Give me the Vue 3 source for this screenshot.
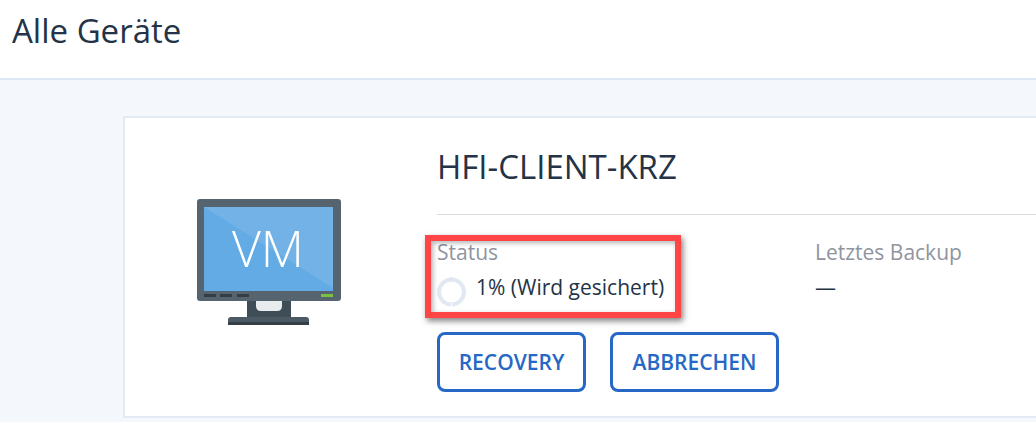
<script setup>
const ledBars = [8, 24, 41]
</script>

<template>
  <div class="page">
    <header class="top">
      <h1>Alle Geräte</h1>
    </header>
    <main class="content">
      <section class="card">
        <div class="device-icon">
          <svg width="146" height="127" viewBox="0 0 146 127">
            <rect x="51" y="100" width="44" height="19" fill="#3f4d57" />
            <path d="M60 101h26v6q0 5-5 5H65q-5 0-5-5z" fill="#e9ecee" />
            <path d="M32 121q0-3 3-3h75q3 0 3 3v5H32z" fill="#4b5a64" />
            <rect x="32" y="123" width="81" height="3" fill="#353f47" />
            <rect x="1" y="0" width="144" height="102" rx="3" fill="#55646e" />
            <rect x="8" y="8" width="129" height="84" fill="#62abe4" />
            <path d="M8 8h129v81z" fill="#73b2e6" />
            <rect v-for="x in ledBars" :key="x" :x="x" y="95" width="12" height="3" fill="#343d44" />
            <rect x="125" y="95" width="12" height="3" fill="#7cc242" />
            <text x="72" y="68" text-anchor="middle" class="vm-label">VM</text>
          </svg>
        </div>
        <div class="details">
          <h2>HFI-CLIENT-KRZ</h2>
          <div class="meta">
            <div class="status">
              <div class="label">Status</div>
              <div class="value status-value">
                <svg class="spinner" width="29" height="30" viewBox="0 0 29 30">
                  <circle cx="14.5" cy="15" r="12.5" fill="none" stroke="#e1e8f2" stroke-width="4" />
                  <rect x="14" y="0" width="1" height="4" fill="#d9e4b8" />
                  <rect x="14" y="26" width="1" height="4" fill="#fff" />
                </svg>
                <span>1% (Wird gesichert)</span>
              </div>
            </div>
            <div class="backup">
              <div class="label">Letztes Backup</div>
              <div class="value">—</div>
            </div>
            <div class="highlight"></div>
          </div>
          <div class="actions">
            <button class="recovery">RECOVERY</button>
            <button class="abort">ABBRECHEN</button>
          </div>
        </div>
      </section>
    </main>
  </div>
</template>

<style>
html, body {
  margin: 0;
  background: #f4f7fc;
  overflow: hidden;
}
</style>

<style scoped>
.page {
  width: 1036px;
  height: 422px;
  overflow: hidden;
  font-family: "Open Sans", "Noto Sans", sans-serif;
  color: #243347;
}

.top {
  height: 78px;
  background: #fff;
  border-bottom: 2px solid #dce6f5;
}

h1 {
  margin: 0;
  padding: 9px 0 0 12px;
  font-size: 33px;
  line-height: 44px;
  font-weight: 400;
}

.content {
  padding: 36px 0 0 123px;
}

.card {
  width: 1000px;
  height: 302px;
  box-sizing: border-box;
  background: #fff;
  border: 2px solid #e2eaf6;
  display: flex;
}

.device-icon {
  width: 312px;
  padding: 81px 0 0 71px;
  box-sizing: border-box;
  flex: none;
}

.device-icon svg {
  display: block;
}

.vm-label {
  font-family: "Open Sans", sans-serif;
  font-size: 50px;
  font-weight: 300;
  fill: #fff;
}

.details {
  flex: 1;
  padding-top: 27px;
}

h2 {
  margin: 0;
  height: 69px;
  border-bottom: 1px solid #d9dde2;
  font-size: 33px;
  line-height: 44px;
  font-weight: 400;
}

.meta {
  position: relative;
  display: flex;
  padding-top: 23px;
  height: 96px;
  box-sizing: border-box;
  font-size: 21px;
}

.status {
  width: 378px;
}

.label {
  color: #8f949e;
  line-height: 28px;
}

.value {
  margin-top: 7px;
  line-height: 28px;
}

.status-value {
  display: flex;
  align-items: flex-start;
  gap: 10px;
}

.spinner {
  flex: none;
  margin-top: 4px;
}

.highlight {
  position: absolute;
  left: -12px;
  top: 20px;
  width: 256px;
  height: 83px;
  box-sizing: border-box;
  border: 6px solid #ff4545;
  box-shadow: 2px 3px 6px rgba(0, 0, 0, 0.5), inset 2px 2px 5px rgba(0, 0, 0, 0.3);
}

.actions {
  display: flex;
  gap: 24px;
  padding-top: 21px;
}

button {
  height: 60px;
  box-sizing: border-box;
  background: #fff;
  border: 3px solid #2668c5;
  border-radius: 8px;
  color: #2668c5;
  font-family: inherit;
  font-size: 21px;
  font-weight: 600;
  padding: 0;
}

.recovery {
  width: 149px;
}

.abort {
  width: 169px;
}
</style>
